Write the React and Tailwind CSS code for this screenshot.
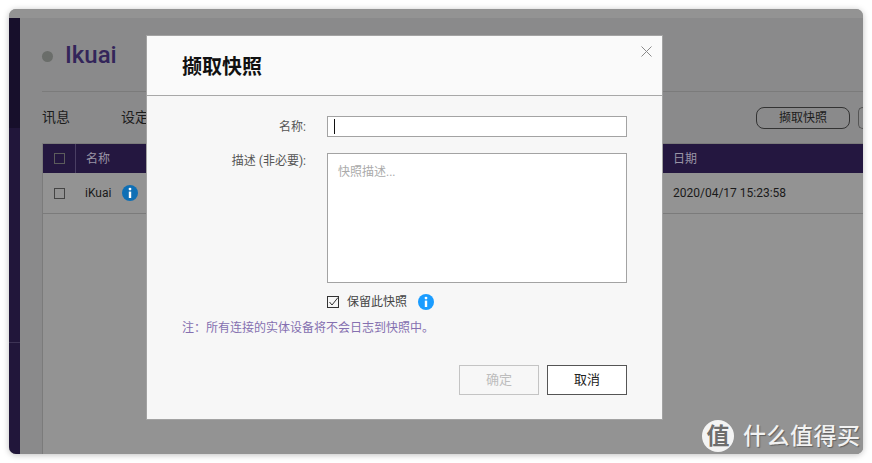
const font = { fontFamily: '"Roboto", "Noto Sans CJK SC", sans-serif' };

function InfoIcon({ size = 16, color = "#1a9cff" }) {
  return (
    <svg width={size} height={size} viewBox="0 0 16 16" className="shrink-0">
      <circle cx="8" cy="8" r="8" fill={color} />
      <circle cx="8" cy="4.1" r="1.4" fill="#fff" />
      <rect x="6.8" y="6.6" width="2.4" height="6.4" fill="#fff" />
    </svg>
  );
}

function Background() {
  return (
    <div className="ml-[9px] mt-[9px] w-[854px] h-[445px] rounded-[7px] overflow-hidden bg-[#939393] flex flex-col shadow-[0_1px_6px_rgba(0,0,0,0.25)]">
      <div className="h-[9px] shrink-0 bg-[#939393]" />
      <div className="flex-1 flex min-h-0">
        {/* sidebar */}
        <div className="w-[11px] shrink-0 flex flex-col">
          <div className="h-[110px] bg-[#170f2b]" />
          <div className="h-[215px] bg-[#21163a] border-b border-[#3d3355]" />
          <div className="flex-1 bg-[#21163a]" />
        </div>
        <div className="flex-1 bg-[#8a8a8b] pl-[22px] min-w-0">
          <div className="flex items-center h-[74px] border-b border-[#7b7b7b]">
            <span className="w-[11px] h-[11px] rounded-full bg-[#6a6d6a] mt-[3px]" />
            <span className="ml-[12px] text-[24px] font-medium text-[#33255a] leading-none">Ikuai</span>
          </div>
          <div className="h-[51px] flex items-center text-[14px] text-[#1c1c1c]">
            <span>讯息</span>
            <span className="ml-[51px]">设定</span>
            <div className="ml-auto flex items-center">
              <span className="w-[94px] h-[22px] rounded-[8px] border border-[#333] flex items-center justify-center text-[12px]">撷取快照</span>
              <span className="ml-[8px] w-[5px] h-[22px] rounded-l-[5px] border border-r-0 border-[#555]" />
            </div>
          </div>
          <div className="h-[calc(100%-125px)] bg-[#939393] border-l border-[#7b7b7b]">
            <div className="h-[30px] bg-[#241740] border-t border-[#7b7b7b] flex items-center text-[12px] text-[#9a95a6]">
              <span className="w-[33px] h-full flex items-center justify-center border-r border-[#4a3f63]">
                <span className="w-[11px] h-[11px] border border-[#5c5c5c]" />
              </span>
              <span className="ml-[10px]">名称</span>
              <span className="ml-auto w-[190px] text-[12px]">日期</span>
            </div>
            <div className="h-[41px] border-b border-[#7b7b7b] flex items-center text-[12px] text-[#1a1a1a]">
              <span className="w-[33px] flex items-center justify-center">
                <span className="w-[11px] h-[11px] border border-[#444]" />
              </span>
              <span className="ml-[9px]">iKuai</span>
              <span className="ml-[11px]">
                <InfoIcon color="#0f6fb5" />
              </span>
              <span className="ml-auto w-[190px]">2020/04/17 15:23:58</span>
            </div>
          </div>
        </div>
      </div>
    </div>
  );
}

function Dialog() {
  return (
    <div className="absolute left-[146px] top-[35px] w-[517px] h-[385px] bg-[#f7f7f7] border border-[#a3a3a3] flex flex-col">
      <div className="h-[60px] shrink-0 bg-[#fafafa] border-b border-[#a8a8a8] pl-[35px] pt-[2px] flex items-center relative">
        <span className="text-[20px] font-bold text-[#111] leading-none">撷取快照</span>
        <svg width="11" height="11" viewBox="0 0 11 11" className="absolute right-[10px] top-[10px]">
          <path d="M0.5 0.5 L10.5 10.5 M10.5 0.5 L0.5 10.5" stroke="#8a8a8a" strokeWidth="1" fill="none" />
        </svg>
      </div>
      <div className="flex-1 flex flex-col pl-[35px] pr-[35px]">
        <div className="flex mt-[20px]">
          <span className="w-[124px] h-[21px] text-right text-[12px] text-[#555] leading-[23px]">名称:</span>
          <div className="ml-[21px] w-[300px] h-[21px] bg-white border border-[#a3a3a3] flex items-center pl-[6px]">
            <span className="w-px h-[15px] bg-[#111]" />
          </div>
        </div>
        <div className="flex mt-[16px]">
          <span className="w-[124px] text-right text-[12px] text-[#555] leading-[16px]">描述 (非必要):</span>
          <div className="ml-[21px] w-[300px] h-[130px] bg-white border border-[#a3a3a3] pl-[10px] pt-[10px] text-[12px] text-[#aaa] leading-[16px]">
            快照描述...
          </div>
        </div>
        <div className="flex items-center mt-[11px] ml-[145px] h-[16px]">
          <span className="w-[12px] h-[12px] border border-[#333] relative bg-[#f7f7f7]">
            <svg width="12" height="12" viewBox="0 0 12 12" className="absolute -left-px -top-px">
              <path d="M2.5 6 L5 9 L11 1.5" stroke="#333" strokeWidth="1" fill="none" />
            </svg>
          </span>
          <span className="ml-[8px] text-[12px] text-[#444]">保留此快照</span>
          <span className="ml-[11px]"><InfoIcon /></span>
        </div>
        <div className="mt-[9px] text-[12px] text-[#8570b0] leading-[18px]">注：所有连接的实体设备将不会日志到快照中。</div>
        <div className="flex justify-end gap-[8px] mt-[28px]">
          <span className="w-[80px] h-[30px] border border-[#c4c4c4] flex items-center justify-center text-[13px] text-[#bdbdbd]">确定</span>
          <span className="w-[80px] h-[30px] border border-[#555] bg-white flex items-center justify-center text-[13px] text-[#222]">取消</span>
        </div>
      </div>
    </div>
  );
}

export default function App() {
  return (
    <div className="relative w-[872px] h-[463px] bg-white overflow-hidden" style={font}>
      <Background />
      <Dialog />
      {/* watermark */}
      <div className="absolute left-[702px] top-[420px] flex items-center">
        <span className="w-[32px] h-[32px] rounded-full bg-[#f4f4f4] flex items-center justify-center text-[23px] font-bold text-[#6e6e6e] leading-none">值</span>
        <span className="ml-[9px] text-[23px] font-medium text-[#f2f2f2] leading-none tracking-[0.5px] [text-shadow:1px_1px_1px_rgba(0,0,0,0.35)]">什么值得买</span>
      </div>
    </div>
  );
}
